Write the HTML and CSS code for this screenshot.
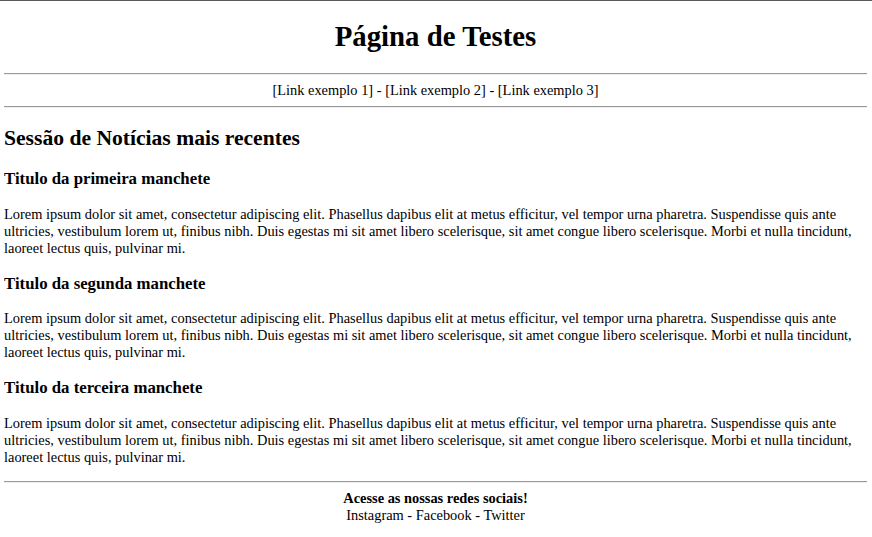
FILE: index.html
```html
<!DOCTYPE html>
<html lang="pt-BR">
<head>
<meta charset="utf-8">
<title>Página de Testes</title>
<link rel="stylesheet" href="styles.css">
</head>
<body>
<header class="topo">
<h1 class="titulo">Página de Testes</h1>
<hr class="regua">
<nav class="menu">[Link exemplo 1] - [Link exemplo 2] - [Link exemplo 3]</nav>
<hr class="regua">
</header>
<main class="conteudo">
<h2 class="secao">Sessão de Notícias mais recentes</h2>
<article class="noticia">
<h3 class="manchete">Titulo da primeira manchete</h3>
<p class="texto">Lorem ipsum dolor sit amet, consectetur adipiscing elit. Phasellus dapibus elit at metus efficitur, vel tempor urna pharetra. Suspendisse quis ante ultricies, vestibulum lorem ut, finibus nibh. Duis egestas mi sit amet libero scelerisque, sit amet congue libero scelerisque. Morbi et nulla tincidunt, laoreet lectus quis, pulvinar mi.</p>
</article>
<article class="noticia">
<h3 class="manchete">Titulo da segunda manchete</h3>
<p class="texto">Lorem ipsum dolor sit amet, consectetur adipiscing elit. Phasellus dapibus elit at metus efficitur, vel tempor urna pharetra. Suspendisse quis ante ultricies, vestibulum lorem ut, finibus nibh. Duis egestas mi sit amet libero scelerisque, sit amet congue libero scelerisque. Morbi et nulla tincidunt, laoreet lectus quis, pulvinar mi.</p>
</article>
<article class="noticia">
<h3 class="manchete">Titulo da terceira manchete</h3>
<p class="texto">Lorem ipsum dolor sit amet, consectetur adipiscing elit. Phasellus dapibus elit at metus efficitur, vel tempor urna pharetra. Suspendisse quis ante ultricies, vestibulum lorem ut, finibus nibh. Duis egestas mi sit amet libero scelerisque, sit amet congue libero scelerisque. Morbi et nulla tincidunt, laoreet lectus quis, pulvinar mi.</p>
</article>
</main>
<hr class="regua">
<footer class="rodape">
<strong class="chamada">Acesse as nossas redes sociais!</strong><br>
Instagram - Facebook - Twitter
</footer>
</body>
</html>
```
FILE: styles.css
```css
html {
  border-top: 1px solid #5a5a5a;
}
body {
  margin: 0 5px 0 4px;
  font-family: "Liberation Serif", "Times New Roman", serif;
  font-size: 14.4px;
  color: #000;
  background: #fff;
}
.titulo {
  text-align: center;
  font-size: 28.8px;
  margin: 19.3px 0;
}
.regua {
  border: none;
  border-top: 1px solid #9a9a9a;
  border-bottom: 1px solid #eeeeee;
  margin: 7.2px 0;
  height: 0;
}
.menu {
  text-align: center;
}
.secao {
  font-size: 21.6px;
  margin: 17.9px 0;
}
.manchete {
  font-size: 16.8px;
  margin: 16.9px 0;
}
.texto {
  margin: 14.4px 0;
}
.rodape {
  text-align: center;
}
```
